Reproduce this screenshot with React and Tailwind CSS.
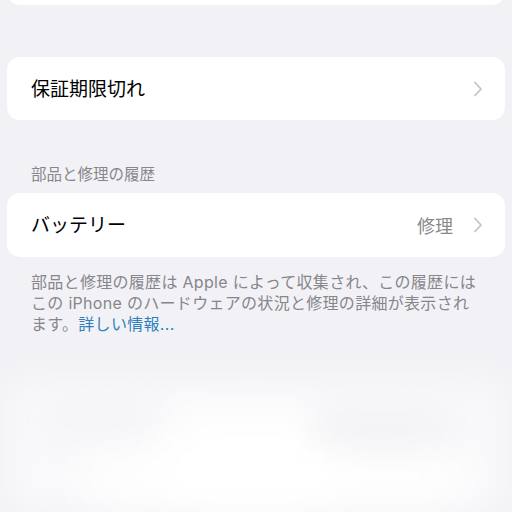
import React from "react";

function Chevron() {
  return (
    <svg width="10" height="16" viewBox="0 0 10 16" fill="none" className="shrink-0">
      <path d="M2 1.5 L8 8 L2 14.5" stroke="#c4c4c8" strokeWidth="1.8" strokeLinecap="round" strokeLinejoin="round" />
    </svg>
  );
}

export default function App() {
  return (
    <div
      className="w-[512px] h-[512px] overflow-hidden bg-[#f2f2f6] flex flex-col"
      style={{ fontFamily: '"Inter", "Noto Sans CJK JP", sans-serif' }}
    >
      {/* bottom edge of the previous card */}
      <div className="mx-[7px] h-[5px] overflow-hidden">
        <div className="h-[40px] -mt-[35px] bg-white rounded-[13px]" />
      </div>

      <div className="mt-[52px] mx-[7px] h-[63px] bg-white rounded-[13px] flex items-center pl-[24px] pr-[22px]">
        <span className="flex-1 text-[19px] text-black pt-[3px]">保証期限切れ</span>
        <Chevron />
      </div>

      <div className="mt-[45px] px-[31px] text-[15.5px] leading-[20px] text-[#86868b]">部品と修理の履歴</div>

      <div className="mt-[8px] mx-[7px] h-[64px] bg-white rounded-[13px] flex items-center pl-[24px] pr-[22px]">
        <span className="flex-1 text-[19px] text-black pt-[3px]">バッテリー</span>
        <span className="text-[18px] text-[#8a8a8e] mr-[20px] pt-[3px]">修理</span>
        <Chevron />
      </div>

      <p className="mt-[15px] px-[31px] text-[16px] leading-[21px] tracking-[0.3px] text-[#86868b] whitespace-nowrap">
        部品と修理の履歴は Apple によって収集され、この履歴には
        <br />
        この iPhone のハードウェアの状況と修理の詳細が表示され
        <br />
        ます。<span className="text-[#2f7fc0]">詳しい情報...</span>
      </p>

      {/* blurred content below */}
      <div className="mt-[26px] flex-1 relative">
        <div className="absolute inset-x-[6px] top-[20px] bottom-0 bg-[#f9f9fb] rounded-[16px] blur-lg" />
        <div className="absolute left-[160px] right-[170px] top-[50px] bottom-[10px] bg-white rounded-[40px] blur-xl" />
        <div className="absolute left-[80px] right-[40px] top-[90px] bottom-[10px] bg-white rounded-[30px] blur-xl" />
        <div className="absolute left-[40px] w-[110px] top-[40px] h-[30px] bg-[#f4f4f7] rounded-full blur-lg" />
        <div className="absolute right-[60px] w-[140px] top-[45px] h-[40px] bg-[#f3f3f6] rounded-full blur-lg" />
      </div>
    </div>
  );
}
